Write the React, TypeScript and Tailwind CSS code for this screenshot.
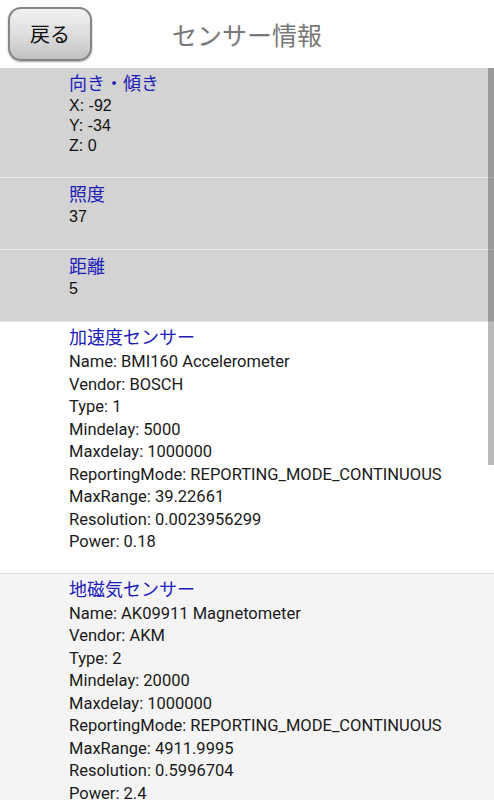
import React from 'react';

type Sensor = {
    title: string;
    lines: string[];
};

const cjk = "font-['Noto_Sans_CJK_JP','Noto_Sans',sans-serif]";

const simple: Sensor[] = [
    { title: '向き・傾き', lines: ['X: -92', 'Y: -34', 'Z: 0'] },
    { title: '照度', lines: ['37'] },
    { title: '距離', lines: ['5'] },
];

const detailed: Sensor[] = [
    {
        title: '加速度センサー',
        lines: [
            'Name: BMI160 Accelerometer',
            'Vendor: BOSCH',
            'Type: 1',
            'Mindelay: 5000',
            'Maxdelay: 1000000',
            'ReportingMode: REPORTING_MODE_CONTINUOUS',
            'MaxRange: 39.22661',
            'Resolution: 0.0023956299',
            'Power: 0.18',
        ],
    },
    {
        title: '地磁気センサー',
        lines: [
            'Name: AK09911 Magnetometer',
            'Vendor: AKM',
            'Type: 2',
            'Mindelay: 20000',
            'Maxdelay: 1000000',
            'ReportingMode: REPORTING_MODE_CONTINUOUS',
            'MaxRange: 4911.9995',
            'Resolution: 0.5996704',
            'Power: 2.4',
        ],
    },
];

export default function App() {
    return (
        <div className="relative h-screen overflow-hidden bg-white">
            {/* Header */}
            <div className="relative flex items-center justify-center h-[68px] bg-white">
                <button
                    type="button"
                    className={`absolute left-[8px] top-[7px] w-[84px] h-[54px] rounded-[13px] border-2 border-[#858585] bg-gradient-to-b from-[#f2f2f2] via-[#dedede] to-[#c2c2c2] shadow-[0_1px_2px_rgba(0,0,0,0.35)] text-[20px] text-[#111] ${cjk}`}
                >
                    戻る
                </button>
                <h1 className={`text-[25px] leading-none text-[#777777] ${cjk}`}>センサー情報</h1>
            </div>

            {/* Simple sensors */}
            {simple.map((s, i) => (
                <div
                    key={s.title}
                    className={`bg-[#d3d3d3] border-b border-[#e6e6e6] pl-[69px] ${i === 0 ? 'pt-0 pb-[21px]' : 'pt-[1px] pb-[22px]'}`}
                >
                    <div className={`text-[18px] leading-[28px] text-[#2020b8] ${cjk}`}>{s.title}</div>
                    {s.lines.map((l) => (
                        <div key={l} className="text-[16px] leading-[20px] text-[#111] font-['Liberation_Sans',Arial,sans-serif]">
                            {l}
                        </div>
                    ))}
                </div>
            ))}

            {/* Detailed sensors */}
            {detailed.map((s, i) => (
                <div
                    key={s.title}
                    className={`pl-[69px] pt-0 pb-[19px] border-b border-[#dddddd] ${i % 2 === 0 ? 'bg-white' : 'bg-[#f4f4f4]'}`}
                >
                    <div className={`text-[18px] leading-[29px] text-[#2020b8] ${cjk}`}>{s.title}</div>
                    {s.lines.map((l) => (
                        <div key={l} className="text-[16.5px] leading-[22.5px] text-[#1a1a1a] font-['Roboto',sans-serif]">
                            {l}
                        </div>
                    ))}
                </div>
            ))}

            {/* Scrollbar overlay */}
            <div className="absolute right-0 top-[68px] w-[6px] h-[397px] bg-[rgba(0,0,0,0.27)]" />
        </div>
    );
}
